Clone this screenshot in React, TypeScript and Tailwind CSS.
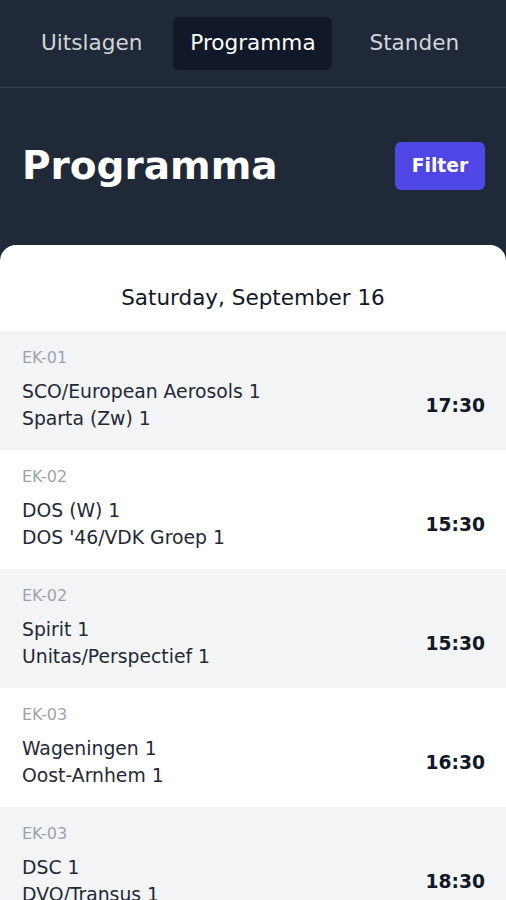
const matches = [
  { code: 'EK-01', home: 'SCO/European Aerosols 1', away: 'Sparta (Zw) 1', time: '17:30' },
  { code: 'EK-02', home: 'DOS (W) 1', away: "DOS '46/VDK Groep 1", time: '15:30' },
  { code: 'EK-02', home: 'Spirit 1', away: 'Unitas/Perspectief 1', time: '15:30' },
  { code: 'EK-03', home: 'Wageningen 1', away: 'Oost-Arnhem 1', time: '16:30' },
  { code: 'EK-03', home: 'DSC 1', away: 'DVO/Transus 1', time: '18:30' },
]

export default function App() {
  return (
    <div className="w-[506px] h-[900px] overflow-hidden bg-[#1f2937] font-['DejaVu_Sans',sans-serif]">
      {/* tab bar */}
      <nav className="flex items-center pl-[41px] h-[88px] border-b border-[#374151] text-[21.6px]">
        <div className="text-[#d1d5db]">Uitslagen</div>
        <div className="ml-[31px] w-[159px] h-[53px] flex items-center justify-center rounded-[6px] bg-[#111827] text-white">
          Programma
        </div>
        <div className="ml-[37px] text-[#d1d5db]">Standen</div>
      </nav>

      {/* page header */}
      <div className="flex items-center justify-between pl-[22px] pr-[21px] pt-[54px] pb-[55px]">
        <h1 className="text-white font-bold text-[39px] leading-[48px]">Programma</h1>
        <button className="w-[90px] h-[48px] rounded-[6px] bg-[#4f46e5] text-white font-bold text-[18.7px]">
          Filter
        </button>
      </div>

      {/* schedule card */}
      <div className="bg-white rounded-t-[16px]">
        <div className="text-center text-[#111827] text-[21.5px] leading-[28px] pt-[39px] pb-[19px]">
          Saturday, September 16
        </div>
        {matches.map((m, i) => (
          <div
            key={i}
            className={`flex items-center justify-between pl-[22px] pr-[21px] pt-[16px] pb-[18px] h-[119px] ${i % 2 === 0 ? 'bg-[#f3f4f6]' : 'bg-white'}`}
          >
            <div className="flex flex-col">
              <span className="text-[#9ca3af] text-[16px] leading-[21px]">{m.code}</span>
              <span className="mt-[10px] text-[#1f2937] text-[18.8px] leading-[27px]">{m.home}</span>
              <span className="text-[#1f2937] text-[18.8px] leading-[27px]">{m.away}</span>
            </div>
            <span className="self-end mb-[12px] text-[#111827] font-bold text-[18.7px]">{m.time}</span>
          </div>
        ))}
      </div>
    </div>
  )
}
